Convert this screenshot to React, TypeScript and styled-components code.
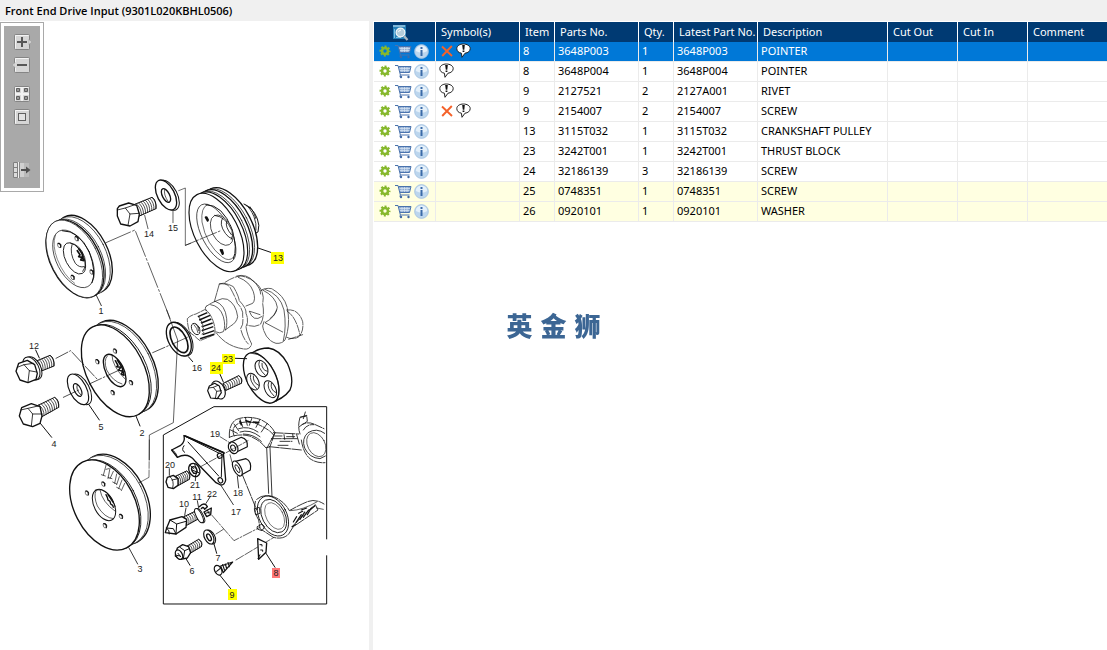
import React from "react";
import styled, { createGlobalStyle, css } from "styled-components";

const GlobalStyle = createGlobalStyle`
  * { box-sizing: border-box; }
  body {
    margin: 0;
    background: #fff;
    color: #000;
    font-family: "Noto Sans", "Open Sans", sans-serif;
    font-size: 11px;
  }
`;

const Page = styled.div`
  min-height: 100vh;
  display: flex;
  flex-direction: column;
`;

const TitleBar = styled.header`
  height: 21px;
  padding: 0 5px;
  display: flex;
  align-items: center;
  background: #f0f0f0;
`;

const Title = styled.h1`
  margin: 0;
  font-size: 11px;
  line-height: 16px;
  font-family: "Open Sans", "Noto Sans", sans-serif;
  font-weight: 600;
  white-space: nowrap;
`;

const Workspace = styled.main`
  flex: 1;
  display: grid;
  grid-template-columns: minmax(0, 1fr) minmax(0, 2fr);
`;

const DrawingPane = styled.section`
  position: relative;
`;

const Drawing = styled.svg`
  display: block;
  width: 100%;
  height: auto;
`;

const ToolPanel = styled.div`
  position: absolute;
  top: 1px;
  left: 0;
  width: 44px;
  padding: 3px;
  border: 1px solid #a9a9a9;
  background: #fff;
`;

const ToolBody = styled.div`
  display: flex;
  flex-direction: column;
  align-items: center;
  gap: 5px;
  height: 162px;
  padding-top: 7px;
  background: #a9a9a9;
`;

const ToolButton = styled.button<{ $space?: number }>`
  width: 20px;
  height: 18px;
  margin: ${(p) => p.$space ?? 0}px 0 0;
  padding: 0;
  border: 0;
  background: none;
  svg { display: block; }
`;

const PartsPane = styled.section`
  border-left: 4px solid #f0f0f0;
  padding: 1px 0 0 1px;
`;

const PartsTable = styled.table`
  width: 100%;
  table-layout: fixed;
  border-collapse: separate;
  border-spacing: 0;
`;

const cell = css`
  height: 20px;
  white-space: nowrap;
  overflow: hidden;
  text-align: left;
  font-weight: 400;
  &:last-child { border-right: 0; }
`;

const HeadCell = styled.th<{ $center?: boolean }>`
  ${cell}
  line-height: 18px;
  vertical-align: middle;
  padding: 0 0 0 5px;
  color: #fff;
  background: #003a73;
  border-right: 1px solid #fff;
  ${(p) => p.$center && css`
    padding: 0 0 0 18px;
    svg { display: block; }
  `}
`;

const Row = styled.tr<{ $tone: Tone }>`
  color: ${(p) => (p.$tone === "selected" ? "#fff" : "#000")};
  background: ${(p) => ({ selected: "#0078d7", plain: "#fff", note: "#ffffe1" })[p.$tone]};
`;

const Cell = styled.td<{ $tight?: boolean }>`
  ${cell}
  line-height: 17px;
  vertical-align: top;
  padding: 0 0 0 ${(p) => (p.$tight ? 2 : 3)}px;
  border-right: 1px solid #ebebeb;
  border-bottom: 1px solid #ebebeb;
`;

const IconStrip = styled.div`
  display: flex;
  align-items: center;
  height: 18px;
`;

const IconButton = styled.button`
  width: 18px;
  height: 18px;
  padding: 0;
  border: 0;
  background: none;
  display: grid;
  place-items: center;
  svg { display: block; }
`;

const SymbolSlot = styled.span`
  width: 17px;
  height: 18px;
  display: grid;
  place-items: center;
  svg { display: block; }
`;

const Watermark = styled.div`
  position: fixed;
  inset: 0;
  display: flex;
  align-items: center;
  justify-content: center;
  gap: 8px;
  pointer-events: none;
  color: #3c6694;
  font-family: "Noto Sans CJK SC", sans-serif;
  font-size: 26px;
  line-height: 32px;
  font-weight: 900;
`;

/* ---------- data ---------- */

type Tone = "selected" | "plain" | "note";
type Part = {
  marks: string;
  item: string;
  no: string;
  qty: string;
  latest: string;
  name: string;
  tone: Tone;
};

const parts: Part[] = [
  { marks: "xb", item: "8", no: "3648P003", qty: "1", latest: "3648P003", name: "POINTER", tone: "selected" },
  { marks: "b", item: "8", no: "3648P004", qty: "1", latest: "3648P004", name: "POINTER", tone: "plain" },
  { marks: "b", item: "9", no: "2127521", qty: "2", latest: "2127A001", name: "RIVET", tone: "plain" },
  { marks: "xb", item: "9", no: "2154007", qty: "2", latest: "2154007", name: "SCREW", tone: "plain" },
  { marks: "", item: "13", no: "3115T032", qty: "1", latest: "3115T032", name: "CRANKSHAFT PULLEY", tone: "plain" },
  { marks: "", item: "23", no: "3242T001", qty: "1", latest: "3242T001", name: "THRUST BLOCK", tone: "plain" },
  { marks: "", item: "24", no: "32186139", qty: "3", latest: "32186139", name: "SCREW", tone: "plain" },
  { marks: "", item: "25", no: "0748351", qty: "1", latest: "0748351", name: "SCREW", tone: "note" },
  { marks: "", item: "26", no: "0920101", qty: "1", latest: "0920101", name: "WASHER", tone: "note" },
];

const widths = [62, 84, 35, 84, 35, 84, 130, 70, 70];
const headings = ["Symbol(s)", "Item", "Parts No.", "Qty.", "Latest Part No.", "Description", "Cut Out", "Cut In", "Comment"];

/* ---------- table icons ---------- */

const Gear = () => (
  <svg width="12" height="12" viewBox="0 0 12 12" fill="none" stroke="#86b82c">
    <circle cx="6" cy="6" r="4.600" strokeWidth="1.800" strokeDasharray="2 1.613" strokeDashoffset="1" />
    <circle cx="6" cy="6" r="3" strokeWidth="2.600" />
  </svg>
);

const Cart = () => (
  <svg width="17" height="15" viewBox="0 0 17 15">
    <path d="M3.500 2.500h12.500l-1.400 6H5z" fill="#8eabd2" />
    <path d="M0 1.500h3l2.400 9.500h9.100M3.500 2.500H16l-1.500 6H5" fill="none" stroke="#4a73ad" />
    <path d="M4.500 4.500h10.500M5 6.500h9.500M7 3v5M9.500 3v5M12 3v5" stroke="#d9e5f3" strokeWidth=".7" />
    <path d="M5.500 11l-.8 1.500" stroke="#4a73ad" />
    <circle cx="6" cy="13" r="1.200" fill="#416aa5" />
    <circle cx="13.500" cy="13" r="1.200" fill="#416aa5" />
  </svg>
);

const Info = () => (
  <svg width="15" height="15" viewBox="0 0 15 15">
    <circle cx="7.500" cy="7.500" r="6.900" fill="#bcd6ee" stroke="#a3c2e0" strokeWidth=".8" />
    <path d="M1.800 7a5.700 5.600 0 0 1 11.400 0q-5 3.500-11.400 0z" fill="#e4f0fa" />
    <path d="M6.500 3h2v2h-2zM6.500 6h2v6h-2z" fill="#3a6ba8" />
  </svg>
);

const Cross = () => (
  <svg width="12" height="12" viewBox="0 0 12 12">
    <path d="M1 1.500l10 9.500M10.800 1L1.200 11" stroke="#f4622a" strokeWidth="1.900" fill="none" />
  </svg>
);

const Bubble = () => (
  <svg width="15" height="16" viewBox="0 0 15 16">
    <path d="M5.400 10.200C2.600 9.800.8 8 .8 5.600.8 2.800 3.800 1 7.400 1s6.800 1.800 6.800 4.600c0 2.500-2.200 4.300-5.200 4.600L6 14.300z" fill="#fff" stroke="#222" strokeWidth="1" />
    <path d="M6.200 2h2.600l-.5 4.800H6.800z" fill="#111" />
    <path d="M6.600 7.500h1.800v1.500H6.600z" fill="#111" />
  </svg>
);

const Lookup = () => (
  <svg width="17" height="17" viewBox="0 0 17 17">
    <rect x="1" y="1" width="13" height="14" fill="#2580b8" />
    <path d="M1.500 2h12" stroke="#d8edf8" strokeWidth="2" strokeDasharray="1 1" />
    <path d="M2.500 5v9M4 13.500h5" stroke="#7dbce0" />
    <circle cx="8.500" cy="8.500" r="4.400" fill="#b4cddb" stroke="#f4f8fa" strokeWidth="1.200" />
    <path d="M6.500 8q.5-2 2.500-2" stroke="#fff" fill="none" />
    <path d="M12 12l3.500 4" stroke="#aab6bf" strokeWidth="2.200" />
  </svg>
);

/* ---------- tool panel icons ---------- */

const Plate = () => (
  <>
    <rect x="2.500" y="1.500" width="15" height="15" rx="1" fill="#d6d6d6" stroke="#858585" />
    <path d="M3.500 15.500v-13h13" fill="none" stroke="#f4f4f4" />
  </>
);

const ToolIcon = ({ kind }: { kind: string }) => (
  <svg width="20" height="18" viewBox="0 0 20 18">
    {kind !== "export" && <Plate />}
    {kind === "in" && (
      <>
        <path d="M17 6.500L19.500 9 17 11.500z" fill="#e8e8e8" stroke="#8d8d8d" strokeWidth=".5" />
        <path d="M10 4v10M5 9h10" stroke="#585858" strokeWidth="2" />
      </>
    )}
    {kind === "out" && (
      <>
        <path d="M3 6.500L.5 9 3 11.500z" fill="#e8e8e8" stroke="#8d8d8d" strokeWidth=".5" />
        <path d="M5 9h10" stroke="#585858" strokeWidth="2" />
      </>
    )}
    {kind === "grid" && (
      <>
        <path d="M10 2v14M3 9h14" stroke="#f2f2f2" strokeWidth="2" />
        <path d="M4.500 3.500h3v3h-3zM12.500 3.500h3v3h-3zM4.500 11.500h3v3h-3zM12.500 11.500h3v3h-3z" fill="#999" stroke="#606060" />
      </>
    )}
    {kind === "fit" && <rect x="6.500" y="5.500" width="7" height="7" fill="#e2e2e2" stroke="#606060" />}
    {kind === "export" && (
      <>
        <path d="M7 2h5v14H7z" fill="#d0d0d0" />
        <path d="M12 2h5v14h-5z" fill="#bababa" />
        <path d="M1.500 1.500h4v15h-4zM1.500 6.500h4M1.500 11.500h4" fill="#dcdcdc" stroke="#808080" />
        <path d="M6.500 1v16" stroke="#f0f0f0" />
        <path d="M7.500 1v16" stroke="#888" />
        <path d="M9 9h6" stroke="#505050" strokeWidth="2" />
        <path d="M14 5.500L18.500 9 14 12.500z" fill="#505050" />
      </>
    )}
  </svg>
);

/* ---------- exploded drawing ---------- */

const TILT = 27.3;
const C2 = Math.cos((TILT * Math.PI) / 180) ** 2;
const S2 = 1 - C2;

/* A leaning ellipse, given by the box that it touches. */
const Disc = ({ box, w = 3, fill = "#fff", dash, dx = 0, dy = 0 }: {
  box: [number, number, number, number]; w?: number; fill?: string; dash?: string; dx?: number; dy?: number;
}) => {
  const [l, t, r, b] = box;
  const a = ((r - l) / 2) ** 2;
  const h = ((b - t) / 2) ** 2;
  const rx = Math.sqrt(Math.max(4, (C2 * a - S2 * h) / (C2 - S2)));
  const ry = Math.sqrt(Math.max(4, (C2 * h - S2 * a) / (C2 - S2)));
  const cx = (l + r) / 2 + dx;
  const cy = (t + b) / 2 + dy;
  return <ellipse cx={cx} cy={cy} rx={rx} ry={ry} fill={fill} strokeWidth={w} strokeDasharray={dash} transform={`rotate(${-TILT} ${cx} ${cy})`} />;
};

/* Threads of a bolt between two ends, each with its upper and lower point. */
const Thread = ({ a, b, c, d, n = 6 }: { a: number[]; b: number[]; c: number[]; d: number[]; n?: number }) => {
  const bits: string[] = [];
  for (let i = 0; i <= n; i++) {
    const f = i / n;
    const x1 = a[0] + (b[0] - a[0]) * f;
    const y1 = a[1] + (b[1] - a[1]) * f;
    const x2 = c[0] + (d[0] - c[0]) * f;
    const y2 = c[1] + (d[1] - c[1]) * f;
    bits.push(`M${x1} ${y1}Q${(x1 + x2) / 2 + 8} ${(y1 + y2) / 2 - 4} ${x2} ${y2}`);
  }
  return (
    <>
      <path d={`M${a}L${b}Q${b[0] + 14} ${b[1] + 8} ${d}L${c}Z`} fill="#fff" strokeWidth="3" />
      <path d={bits.join("")} strokeWidth="2.200" />
    </>
  );
};

const Holes = ({ at }: { at: [number, number][] }) => (
  <>
    {at.map(([x, y]) => (
      <g key={`${x}-${y}`}>
        <ellipse cx={x} cy={y} rx="5" ry="7" strokeWidth="1.500" transform={`rotate(-20 ${x} ${y})`} />
        <path d={`M${x - 4} ${y - 6}q9 0 8 12`} strokeWidth="3.500" />
      </g>
    ))}
  </>
);

const Zone = ({ x, y, children }: { x: number; y: number; children: React.ReactNode }) => (
  <g transform={`translate(${x} ${y}) scale(.33333)`}>{children}</g>
);

const callouts: [string, number, number][] = [
  ["1", 101, 314], ["14", 149, 237], ["15", 173, 231], ["13", 278, 261], ["12", 34, 349], ["4", 54, 447],
  ["5", 101, 430], ["2", 142, 436], ["16", 197, 371], ["23", 228, 362], ["24", 216, 371], ["19", 215, 437],
  ["20", 170, 468], ["3", 140, 572], ["21", 195, 488], ["10", 184, 507], ["11", 197, 500], ["22", 212, 497],
  ["6", 192, 574], ["7", 218, 561], ["18", 238, 496], ["17", 236, 515], ["9", 232, 598], ["8", 276, 576],
];

const Exploded = () => (
  <Drawing viewBox="0 21 369 629" role="img" aria-label="Front end drive input, exploded view">
    <g fill="none" stroke="#111" strokeLinejoin="round" strokeLinecap="round">
      {/* crankshaft */}
      <Zone x={170} y={170}>
        <g strokeWidth="2">
          <path d="M133 395L148 342Q160 334 190 350Q205 375 208 392Q230 415 228 430Q238 455 228 470Q230 492 245 522Q240 540 222 537Q170 530 140 490" strokeDasharray="26 3" />
          <path d="M148 342Q170 338 180 352Q198 385 202 400Q222 420 218 440Q222 462 212 476Q218 505 235 522" strokeDasharray="30 5" />
          <path d="M165 337Q190 320 212 318Q245 322 268 350Q285 375 278 400Q285 440 272 462Q255 475 232 465" strokeDasharray="30 4" />
          <path d="M205 322Q240 335 250 365Q258 390 248 400L228 408M200 318Q230 310 252 335Q272 355 272 372" />
          <path d="M272 362Q285 352 305 356Q345 378 352 415Q362 465 345 510Q335 522 318 520Q285 510 278 468L282 455" strokeDasharray="34 3" />
          <path d="M278 360Q318 380 322 412Q318 440 285 458L338 486M285 358Q330 372 342 420Q350 470 340 512M240 424L270 434M238 424Q250 458 275 440M320 420Q315 436 300 446" />
          <path d="M350 420Q385 415 398 455Q402 488 384 502Q365 510 350 502M352 424Q378 440 390 495M356 508L398 494" strokeDasharray="22 4" />
          <path d="M110 408Q125 398 140 392Q158 382 172 388Q198 402 203 440Q200 458 182 468L166 480M110 408Q100 412 112 426M122 404Q150 408 160 440Q168 470 160 485Q150 492 138 486M136 394Q166 404 170 446Q172 470 166 480" />
        </g>
        <path d="M52 446Q60 436 78 432L104 419Q120 425 130 455Q138 480 134 494L90 512Q80 505 74 498L60 488Q52 468 52 446Z" fill="#fff" strokeWidth="2" strokeDasharray="20 4" />
        <path d="M84 440L112 428M88 450L120 436M94 459L124 447M97 470L128 459M96 482L130 470M98 494L133 482M90 506L132 493" strokeWidth="4.500" strokeLinecap="butt" />
        <path d="M84 440l6 4-2 6 7 3-2 6 6 4-4 7 6 4-5 8 6 6-6 4" strokeWidth="2" />
        <Disc box={[64, 460, 90, 494]} w={2.5} />
        <path d="M72 464Q82 474 84 488M78 462q8 8 8 20M20 505L62 488" strokeWidth="2" />
      </Zone>

      {/* pulley 1 with bolt 14 and washer 15 */}
      <Zone x={0} y={170}>
        <Disc box={[138, 150, 312, 383]} dx={25} dy={-14} w={4} />
        <Disc box={[138, 150, 312, 383]} dx={19} dy={-10} w={2} />
        <Disc box={[138, 150, 312, 383]} dx={5} dy={-3} w={2} />
        <Disc box={[138, 150, 312, 383]} w={4} fill="none" />
        <Disc box={[138, 150, 308, 383]} w={2} fill="#fff" />
        <Disc box={[158, 180, 283, 353]} w={2} />
        <path d="M166 196Q156 226 172 268Q192 318 224 340" strokeWidth="1.500" />
        <path d="M187 182Q238 182 268 246Q290 306 276 338" strokeWidth="3" />
        <Disc box={[190, 218, 257, 312]} w={2.5} />
        <path d="M212 220Q240 222 254 262Q260 290 248 304M216 224Q208 250 226 280Q238 294 252 290" strokeWidth="2.500" />
        <path d="M232 242l8 12-4 6 10 2-4 8 10 2M236 236l10 14 4 20" strokeWidth="5" />
        <Holes at={[[178, 226], [230, 206], [275, 306], [218, 322]]} />
        <path d="M289 376L304 407" strokeWidth="2.500" />
        <path d="M318 218L405 180L512 450" strokeWidth="2" strokeDasharray="80 7 6 7" />
        <Thread a={[402, 104]} b={[456, 82]} c={[418, 138]} d={[468, 116]} n={8} />
        <path d="M352 116L358 108L386 99L410 106L418 132L414 155L390 168L362 162L352 138Z" fill="#fff" strokeWidth="4" />
        <path d="M352 120L376 114L390 132L384 166M376 114L402 105M390 132L416 130" strokeWidth="2.500" />
        <path d="M434 136L444 176M519 120L519 158" strokeWidth="2" />
        <Disc box={[466, 30, 530, 120]} dx={8} dy={1} w={3} />
        <Disc box={[466, 30, 530, 120]} w={4} />
        <Disc box={[484, 56, 512, 97]} w={4} />
        <path d="M494 58Q490 74 504 94" strokeWidth="2" />
        <path d="M536 62L556 54V226L572 220" strokeWidth="1.800" />
      </Zone>

      {/* triple pulley 13 */}
      <Zone x={170} y={170}>
        <path d="M222 102Q248 112 262 146Q270 166 264 186Q250 196 240 180" fill="#fff" strokeWidth="3" />
        <Disc box={[57, 70, 222, 305]} dx={41} dy={-17} w={4} />
        <path d="M228 106Q240 112 252 140Q260 160 258 180M240 110Q252 124 258 146" strokeWidth="2.500" />
        <Disc box={[57, 70, 222, 305]} dx={32} dy={-14} w={2} />
        <Disc box={[57, 70, 222, 305]} dx={26} dy={-11} w={4} />
        <Disc box={[57, 70, 222, 305]} dx={17} dy={-7} w={2} />
        <Disc box={[57, 70, 222, 305]} dx={11} dy={-4} w={3.500} />
        <Disc box={[57, 70, 222, 305]} w={3.500} />
        <Disc box={[80, 102, 198, 278]} w={2} />
        <path d="M112 104Q92 112 96 156Q108 224 158 262Q178 276 190 262" strokeWidth="1.800" />
        <path d="M108 104Q158 104 186 178Q204 238 190 266" strokeWidth="3" />
        <Disc box={[121, 135, 190, 226]} w={2} />
        <path d="M134 136Q168 140 186 182Q190 200 184 208M158 144Q146 162 166 190Q176 204 186 206M170 154Q164 170 184 194" strokeWidth="2.500" />
        <path d="M107 142l6 10M110 142l4 8M152 240l6 12M156 240l3 10" strokeWidth="6" />
        <path d="M46 226L150 183" strokeWidth="2" strokeDasharray="42 6 5 6" />
        <path d="M264 234L302 247" strokeWidth="3" />
      </Zone>

      {/* pulley 2, bolts 12 and 4, washer 5, seal 16 */}
      <Zone x={0} y={310}>
        <Disc box={[244, 45, 450, 320]} dx={25} dy={-14} w={4} />
        <Disc box={[244, 45, 450, 320]} dx={20} dy={-11} w={2} />
        <Disc box={[244, 45, 450, 320]} dx={4} dy={-2} w={2.500} />
        <Disc box={[244, 45, 448, 320]} w={4} />
        <Disc box={[310, 133, 378, 230]} w={4} />
        <path d="M322 138Q310 150 320 180Q338 214 366 222M336 136Q336 168 376 208" strokeWidth="2" />
        <path d="M346 152l8 14-4 4 12 2-6 8 12 4-4 8 8 4M352 150l14 22 6 22" strokeWidth="4.500" />
        <Holes at={[[345, 123], [292, 155], [393, 218], [338, 248]]} />
        <Disc box={[202, 192, 266, 284]} dx={9} dy={0} w={3} />
        <Disc box={[202, 192, 266, 284]} w={3.500} />
        <Disc box={[220, 221, 246, 259]} w={3.500} />
        <path d="M232 224Q226 238 242 254" strokeWidth="2.500" />
        <Thread a={[112, 152]} b={[150, 136]} c={[122, 184]} d={[162, 168]} n={6} />
        <Disc box={[68, 141, 120, 210]} dx={6} dy={-1} w={3} />
        <Disc box={[68, 141, 120, 210]} w={3} />
        <path d="M48 184L56 160L82 151L104 164L112 190L108 208L84 218L60 210Z" fill="#fff" strokeWidth="4" />
        <path d="M52 172L72 164L88 182L84 216M72 164L100 160M88 182L110 186" strokeWidth="2.500" />
        <Thread a={[110, 288]} b={[164, 262]} c={[126, 320]} d={[176, 292]} n={8} />
        <path d="M58 318L65 293L94 281L120 290L126 318L120 340L98 350L70 342Z" fill="#fff" strokeWidth="4" />
        <path d="M62 300L84 295L98 312L94 348M84 295L114 288M98 312L126 312" strokeWidth="2.500" />
        <path d="M107 120L118 144M121 340L155 382M266 283L298 330M408 318L420 348" strokeWidth="3" />
        <path d="M168 145L212 122L292 208M190 262L236 240M268 222L356 181M458 128L540 92" strokeWidth="2.200" strokeDasharray="40 6 5 6" />
        <Disc box={[499, 37, 574, 138]} dx={5} w={3} />
        <Disc box={[499, 37, 574, 138]} w={4} />
        <Disc box={[510, 51, 564, 128]} w={5} />
        <path d="M500 0L533 90L520 338L448 375V450M518 102L562 82" strokeWidth="2" />
      </Zone>

      {/* pulley 3 */}
      <Zone x={50} y={440}>
        <Disc box={[59, 60, 270, 330]} dx={31} dy={-17} w={4} />
        <Disc box={[59, 60, 270, 330]} dx={25} dy={-14} w={2} />
        <Disc box={[59, 60, 270, 330]} dx={3} dy={-1} w={2.500} />
        <Disc box={[59, 60, 268, 330]} w={4} />
        <Disc box={[127, 148, 197, 242]} w={3} />
        <path d="M138 152Q130 168 142 198Q164 234 190 236M150 150Q156 186 196 214M136 150Q176 140 196 200" strokeWidth="2" />
        <path d="M168 164l4 8 2 8 6 4 2 8 6 4 2 6M174 164L190 188" strokeWidth="4" />
        <Holes at={[[160, 132], [111, 159], [213, 229], [165, 257]]} />
        <path d="M168 76L160 106M154 104l12 4M180 84L174 116M168 88l8-2M190 94L180 116M174 112l12 4M200 102L194 130M188 126l12 6M208 110L200 134M216 120L206 146M200 142l12 6M224 130L214 152" strokeWidth="2" />
        <path d="M237 324L263 372" strokeWidth="2.500" />
        <path d="M298 0L297 112L268 128" strokeWidth="1.800" strokeDasharray="60 5 20 5" />
      </Zone>

      {/* thrust block 23, bolt 24, detail frame, upper housing */}
      <Zone x={160} y={330}>
        <path d="M268 75Q290 55 325 54Q358 58 382 100Q404 150 390 180Q370 208 328 219Z" fill="#fff" strokeWidth="4" />
        <Disc box={[250, 68, 357, 219]} w={4} />
        <path d="M272 69Q320 72 346 130Q366 180 350 214" strokeWidth="2" />
        <Disc box={[285, 91, 324, 140]} w={3} />
        <Disc box={[260, 130, 298, 180]} w={3} />
        <Disc box={[312, 152, 350, 203]} w={3} />
        <path d="M298 94Q290 112 316 136M306 100Q304 120 322 124M272 134Q266 152 290 176M280 138Q278 158 296 166M326 156Q318 174 342 198M334 160Q330 180 348 188" strokeWidth="2.500" />
        <Thread a={[190, 160]} b={[236, 137]} c={[198, 181]} d={[244, 160]} n={7} />
        <Disc box={[154, 153, 196, 207]} w={3.500} />
        <path d="M143 182L148 168L164 160L178 168L184 188L172 206L152 204Z" fill="#fff" strokeWidth="3.500" />
        <path d="M146 174L160 172L170 184L166 206M160 172L174 166M170 184L184 182" strokeWidth="2.500" />
        <path d="M178 128L190 156M226 85L260 86M85 80L98 95" strokeWidth="3" />
        <path d="M10 822V315L162 230H500V628M500 676V822H10" strokeWidth="3" strokeLinecap="butt" />

        <g strokeWidth="2.500">
          <path d="M208 322Q206 280 230 268Q262 256 300 268Q332 282 345 308L330 350L318 354Q300 330 268 318Q236 310 208 322" strokeDasharray="24 4" />
          <path d="M222 318Q212 290 236 280Q270 270 296 284Q330 300 340 314" strokeDasharray="20 4" />
          <path d="M222 282l14 20M240 268l8 22M256 262l6 24M276 264l-8 22M300 268l-12 24M322 280l-18 26M212 300l20 10M236 296q30-10 58 10M240 306q30-10 60 14M250 312q30 0 54 22" />
          <path d="M240 274l4 10M258 272l12 4M280 276l16 2" strokeWidth="5" />
          <path d="M340 308L416 312M334 326L412 326M328 350L424 360M345 308L322 352M372 314l2 14M398 312l2 14M410 314l8 28M360 334h36M354 346h30M344 318h22M380 320h24" strokeDasharray="30 4" />
          <path d="M420 312Q412 290 420 262L440 258M418 290Q440 270 466 284L492 296M424 330Q430 370 450 386Q470 400 495 398M420 262l20-6 2 18-16 10M436 246l-6 20M430 300Q440 282 462 284" strokeDasharray="22 4" />
        </g>
        <path d="M494 310Q470 292 444 308Q424 326 434 354Q448 384 480 386L496 378" strokeWidth="2.500" />
        <Disc box={[440, 308, 498, 380]} w={1.800} fill="none" />
        <path d="M320 352L326 490M330 352L336 500" strokeWidth="2.500" />

        {/* bracket 17 and sleeves 18, 19 */}
        <path d="M35 360L62 346Q76 336 72 317L190 368L197 450Q194 466 182 465L168 458L104 392Q84 366 52 382Z" fill="#fff" strokeWidth="4" />
        <path d="M72 317L186 374M84 336L176 438M35 360Q48 364 52 382M72 347q-10 14 2 20M186 374l-2 66" strokeWidth="3" />
        <path d="M76 318L192 368" strokeWidth="5" />
        <Disc box={[172, 370, 186, 385]} w={3.500} />
        <Disc box={[174, 443, 188, 459]} w={3.500} />
        <path d="M212 337L244 322Q264 326 262 350L222 370Z" fill="#fff" strokeWidth="3.500" />
        <Disc box={[205, 336, 234, 371]} w={3.500} />
        <Disc box={[212, 345, 227, 363]} w={3} />
        <path d="M226 394L258 386Q276 394 271 420L238 438Z" fill="#fff" strokeWidth="3.500" />
        <Disc box={[217, 393, 247, 438]} w={3.500} />
        <Disc box={[225, 404, 240, 428]} w={2.500} />
        <path d="M122 410L264 332M180 320L212 340M210 374l8 30" strokeWidth="2" strokeDasharray="24 5" />
      </Zone>

      {/* small fasteners and lower housing */}
      <Zone x={160} y={460}>
        <Thread a={[48, 48]} b={[80, 33]} c={[56, 76]} d={[88, 58]} n={6} />
        <path d="M18 66L22 52L40 46L54 56L54 76L40 86L24 82Z" fill="#fff" strokeWidth="4" />
        <path d="M30 50Q44 62 38 84M54 56l-18 4" strokeWidth="2.500" />
        <Disc box={[86, 10, 120, 50]} w={4} />
        <Disc box={[95, 20, 111, 40]} w={4} />
        <path d="M90 16l12 10M96 30l20 8M104 14l6 12M110 40l-6 10" strokeWidth="3" />
        <path d="M28 26L28 46M107 48L106 62M184 78L220 134M232 48L236 84M78 144L74 166M112 122L116 144M152 108L138 130" strokeWidth="2.500" />
        <Thread a={[72, 170]} b={[114, 150]} c={[80, 196]} d={[124, 172]} n={7} />
        <path d="M30 180L66 170L80 178L78 202L48 222L16 218L20 204Z" fill="#fff" strokeWidth="4" />
        <path d="M30 180L50 192L48 222M50 192L78 184M20 204L40 206L48 222M20 204Q30 212 28 222" strokeWidth="3" />
        <Disc box={[104, 146, 130, 188]} dx={4} w={3} />
        <Disc box={[104, 146, 130, 188]} w={3} />
        <path d="M118 140Q134 124 142 140L134 148Q130 138 124 146M132 156L154 144L152 164L140 170Z" strokeWidth="4" />
        <path d="M142 150l6 12M136 160l14-4" strokeWidth="3" />
        <Thread a={[82, 258]} b={[116, 238]} c={[90, 280]} d={[124, 260]} n={6} />
        <path d="M52 264L68 254L86 260L92 278L82 294L62 298L46 288Z" fill="#fff" strokeWidth="4" />
        <Disc box={[46, 270, 68, 298]} w={4} />
        <path d="M60 262L74 272L70 296M74 272L88 266M54 280l8 10M50 286l10 2" strokeWidth="3" />
        <Disc box={[131, 210, 162, 252]} dx={5} w={3} />
        <Disc box={[131, 210, 162, 252]} w={3.500} />
        <Disc box={[140, 222, 154, 242]} w={4} />
        <path d="M78 296L90 316M162 252L170 280M180 346L212 386M318 280L345 322" strokeWidth="3" />
        <path d="M156 166L222 242L300 202M168 222L190 208" strokeWidth="2" strokeDasharray="28 5 6 5" />
        <path d="M228 300L342 232" strokeWidth="2" strokeDasharray="26 5" />
        <Disc box={[163, 316, 186, 345]} w={4} />
        <path d="M170 334l10-8M182 318L218 306L190 338ZM188 314l6 18M196 312l4 14M204 308l4 12" strokeWidth="3.500" />
        <path d="M293 236L320 249L318 277L296 298Z" fill="#fff" strokeWidth="4" />
        <path d="M300 254h6v4M302 270h6v4M294 296L300 284" strokeWidth="3" />

        <g strokeWidth="2.500">
          <path d="M247 44L290 150M290 118Q310 100 340 110Q372 122 388 152Q420 134 440 126Q464 114 492 132M286 124Q278 150 296 180L300 206L340 232Q370 240 386 222L400 200L474 150L466 134L440 156L400 196" strokeDasharray="32 4" />
          <path d="M292 200l14-8 8 8-8 12-12-4zM284 146l14-4 2 18-12 4z" />
          <path d="M400 186l10-16M408 188l16-24M420 178l14-22M430 172l16-22M442 164l12-20M416 160l12-6M450 150l14-12M424 150l16-6M396 200l10-6" strokeWidth="3.500" />
          <path d="M392 152Q430 150 470 126M470 144L490 148" strokeWidth="2" />
        </g>
        <Disc box={[292, 108, 386, 228]} w={2.500} fill="none" />
        <Disc box={[302, 118, 380, 218]} w={2.500} fill="none" />
        <Disc box={[314, 128, 374, 208]} w={1.500} fill="none" />
      </Zone>
    </g>

    <g>
      <rect x="271" y="252" width="13" height="12" fill="#ff0" />
      <rect x="222" y="354" width="13" height="10" fill="#ff0" />
      <rect x="210" y="362" width="13" height="12" fill="#ff0" />
      <rect x="228" y="589" width="9" height="11" fill="#ff0" />
      <rect x="272" y="568" width="8" height="10" fill="#ff7878" />
    </g>
    <g fontFamily='"Liberation Sans", sans-serif' fontSize="9" textAnchor="middle" fill="#222">
      {callouts.map(([n, x, y]) => <text key={n} x={x} y={y}>{n}</text>)}
    </g>
  </Drawing>
);

/* ---------- page ---------- */

export default function App() {
  return (
    <Page>
      <GlobalStyle />
      <TitleBar>
        <Title>Front End Drive Input (9301L020KBHL0506)</Title>
      </TitleBar>
      <Workspace>
        <DrawingPane>
          <Exploded />
          <ToolPanel>
            <ToolBody>
              <ToolButton aria-label="Zoom in"><ToolIcon kind="in" /></ToolButton>
              <ToolButton aria-label="Zoom out"><ToolIcon kind="out" /></ToolButton>
              <ToolButton aria-label="Show all" $space={6}><ToolIcon kind="grid" /></ToolButton>
              <ToolButton aria-label="Fit to window"><ToolIcon kind="fit" /></ToolButton>
              <ToolButton aria-label="Move panel" $space={30}><ToolIcon kind="export" /></ToolButton>
            </ToolBody>
          </ToolPanel>
        </DrawingPane>
        <PartsPane>
          <PartsTable>
            <colgroup>
              {widths.map((w, i) => <col key={i} width={w} />)}
              <col />
            </colgroup>
            <thead>
              <tr>
                <HeadCell $center aria-label="Actions"><Lookup /></HeadCell>
                {headings.map((h) => <HeadCell key={h}>{h}</HeadCell>)}
              </tr>
            </thead>
            <tbody>
              {parts.map((p, i) => (
                <Row key={i} $tone={p.tone}>
                  <Cell $tight>
                    <IconStrip>
                      <IconButton aria-label="Options"><Gear /></IconButton>
                      <IconButton aria-label="Add to cart"><Cart /></IconButton>
                      <IconButton aria-label="Information"><Info /></IconButton>
                    </IconStrip>
                  </Cell>
                  <Cell $tight>
                    <IconStrip>
                      {p.marks.split("").map((m) => (
                        <SymbolSlot key={m}>{m === "x" ? <Cross /> : <Bubble />}</SymbolSlot>
                      ))}
                    </IconStrip>
                  </Cell>
                  <Cell>{p.item}</Cell>
                  <Cell>{p.no}</Cell>
                  <Cell>{p.qty}</Cell>
                  <Cell>{p.latest}</Cell>
                  <Cell>{p.name}</Cell>
                  <Cell />
                  <Cell />
                  <Cell />
                </Row>
              ))}
            </tbody>
          </PartsTable>
        </PartsPane>
      </Workspace>
      <Watermark>
        <span>英</span>
        <span>金</span>
        <span>狮</span>
      </Watermark>
    </Page>
  );
}
